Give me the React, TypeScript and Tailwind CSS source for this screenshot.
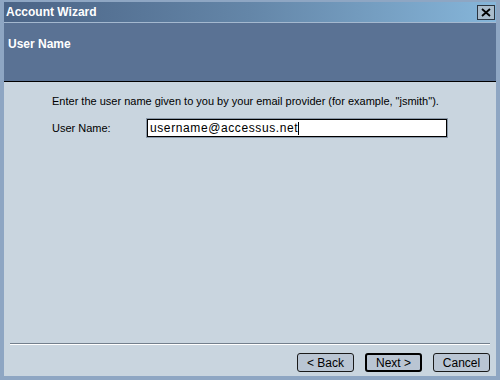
import React from "react";

const font = { fontFamily: "'Liberation Sans', Arial, sans-serif" };

function WizButton({ label, primary }: { label: string; primary?: boolean }) {
  return (
    <button
      className={`h-[19px] w-[57px] rounded-[3px] bg-[#b9c5d3] text-[12px] text-black leading-none ${
        primary ? "border-2 border-black" : "border border-[#1a1a1a]"
      }`}
    >
      {label}
    </button>
  );
}

export default function App() {
  return (
    <div className="w-[500px] h-[380px] bg-[#8ea6c3] pt-[2px] px-[4px] pb-[4px] flex flex-col" style={font}>
      <div className="h-[20px] flex items-center justify-between pl-[2px] pr-[1px] bg-gradient-to-r from-[#4b6486] via-[#6486a8] to-[#86b6da]">
        <span className="text-white font-bold text-[12px]">Account Wizard</span>
        <div className="w-[18px] h-[15px] bg-[#a9bccc] border border-[#2a3440] flex items-center justify-center">
          <svg width="10" height="9" viewBox="0 0 10 9">
            <path d="M1 1 L9 8 M9 1 L1 8" stroke="#000" strokeWidth="1.8" />
          </svg>
        </div>
      </div>
      <div className="h-[1px] bg-[#a4b8cf]" />
      <div className="flex-1 flex flex-col bg-[#c9d5df]">
        <div className="h-[59px] bg-[#5a7294] border-b border-black pl-[4px] pt-[8px]">
          <span className="text-white font-bold text-[12px]">User Name</span>
        </div>
        <div className="flex-1 flex flex-col pl-[48px] pt-[14px]">
          <p className="text-[11px] text-black leading-none whitespace-nowrap">
            Enter the user name given to you by your email provider (for example, "jsmith").
          </p>
          <div className="flex items-center mt-[12px]">
            <span className="w-[95px] text-[11px] text-black">User Name:</span>
            <div className="w-[300px] h-[18px] bg-white border border-black outline outline-1 outline-[#8a98a8] flex items-center pl-[2px] text-[12px] tracking-[0.6px] text-black">
              username@accessus.net<span className="w-[1px] h-[13px] bg-black" />
            </div>
          </div>
        </div>
        <div className="mx-[6px] h-[2px] border-t border-[#737f8c] border-b border-b-white" />
        <div className="flex items-center justify-end gap-[11px] pr-[6px] pt-[8px] pb-[4px]">
          <WizButton label="< Back" />
          <WizButton label="Next >" primary />
          <WizButton label="Cancel" />
        </div>
      </div>
    </div>
  );
}
